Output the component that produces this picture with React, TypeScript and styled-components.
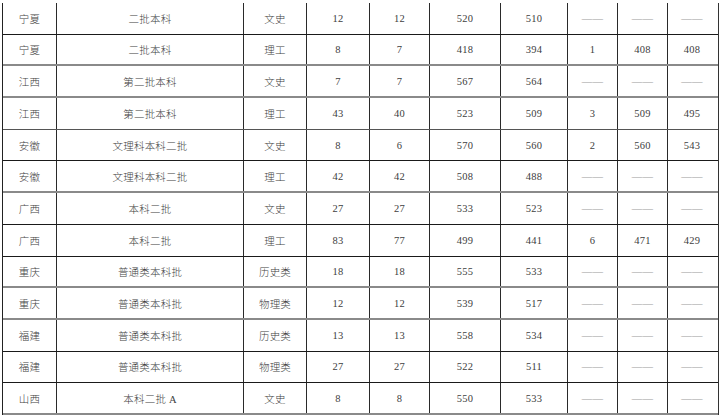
import React from "react";
import styled, { createGlobalStyle } from "styled-components";

const GlobalBody = createGlobalStyle`
  html, body {
    margin: 0;
    padding: 0;
    background: #ffffff;
  }
`;

type Line = "dark" | "gray" | "mid";

const rows: { cells: string[]; line: Line }[] = [
  { cells: ["宁夏", "二批本科", "文史", "12", "12", "520", "510", "——", "——", "——"], line: "dark" },
  { cells: ["宁夏", "二批本科", "理工", "8", "7", "418", "394", "1", "408", "408"], line: "gray" },
  { cells: ["江西", "第二批本科", "文史", "7", "7", "567", "564", "——", "——", "——"], line: "gray" },
  { cells: ["江西", "第二批本科", "理工", "43", "40", "523", "509", "3", "509", "495"], line: "mid" },
  { cells: ["安徽", "文理科本科二批", "文史", "8", "6", "570", "560", "2", "560", "543"], line: "dark" },
  { cells: ["安徽", "文理科本科二批", "理工", "42", "42", "508", "488", "——", "——", "——"], line: "gray" },
  { cells: ["广西", "本科二批", "文史", "27", "27", "533", "523", "——", "——", "——"], line: "dark" },
  { cells: ["广西", "本科二批", "理工", "83", "77", "499", "441", "6", "471", "429"], line: "dark" },
  { cells: ["重庆", "普通类本科批", "历史类", "18", "18", "555", "533", "——", "——", "——"], line: "gray" },
  { cells: ["重庆", "普通类本科批", "物理类", "12", "12", "539", "517", "——", "——", "——"], line: "gray" },
  { cells: ["福建", "普通类本科批", "历史类", "13", "13", "558", "534", "——", "——", "——"], line: "dark" },
  { cells: ["福建", "普通类本科批", "物理类", "27", "27", "522", "511", "——", "——", "——"], line: "dark" },
  { cells: ["山西", "本科二批 A", "文史", "8", "8", "550", "533", "——", "——", "——"], line: "gray" },
];

const lineColor = { dark: "#1a1a1a", gray: "#8a8a8a", mid: "#555555" };
const lineWidth = { dark: "1px", gray: "2px", mid: "1.5px" };

const Table = styled.div`
  margin: 3px 0 0 2px;
  width: 715px;
  border-left: 1.5px solid #222;
  border-right: 1.5px solid #333;
  font-family: "Liberation Serif", "Noto Sans CJK SC", serif;
  font-size: 10.5px;
  font-weight: 300;
  color: #3a3a3a;
`;

const Row = styled.div<{ $line: Line }>`
  display: grid;
  grid-template-columns: 53px 187px 63px 63px 60px 71px 67px 50px 50px 49px;
  height: 31.7px;
  box-sizing: border-box;
  border-bottom: ${(p) => lineWidth[p.$line]} solid ${(p) => lineColor[p.$line]};
`;

const Cell = styled.div<{ $dash?: boolean; $first?: boolean }>`
  display: flex;
  align-items: center;
  justify-content: center;
  border-left: ${(p) => (p.$first ? "none" : "1.5px solid #2a2a2a")};
  color: ${(p) => (p.$dash ? "#a0a0a0" : "#404040")};
  white-space: nowrap;
  letter-spacing: 0.2px;
`;

const App = () => {
  return (
    <>
      <GlobalBody />
      <Table>
        {rows.map((r, i) => (
          <Row key={i} $line={r.line}>
            {r.cells.map((c, j) => (
              <Cell key={j} $first={j === 0} $dash={c === "——"}>
                {c}
              </Cell>
            ))}
          </Row>
        ))}
      </Table>
    </>
  );
};

export default App;
